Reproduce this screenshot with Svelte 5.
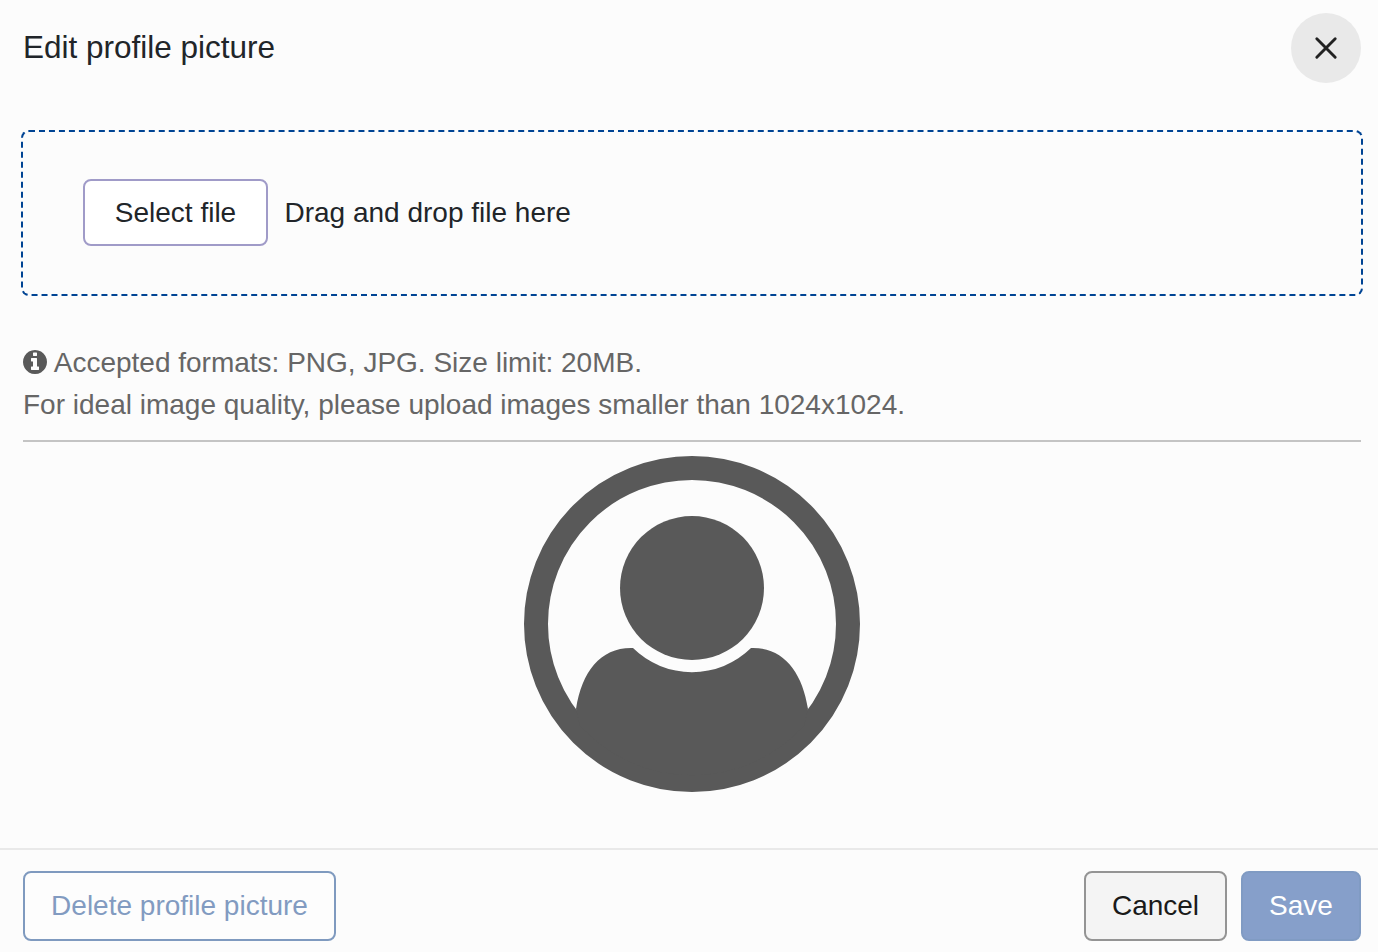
<script>
  let title = "Edit profile picture";
  let formats = "PNG, JPG";
  let sizeLimit = "20MB";
  let dimensions = "1024x1024";
</script>

<style>
  :global(body) {
    margin: 0;
    background-color: #fcfcfc;
  }

  .modal {
    display: flex;
    flex-direction: column;
    box-sizing: border-box;
    height: 952px;
    overflow: hidden;
    font-family: "Liberation Sans", Arial, sans-serif;
    font-size: 28px;
    line-height: 42px;
    color: #212529;
  }

  .modal-header {
    display: flex;
    justify-content: space-between;
    align-items: center;
    padding: 13px 17px 0 23px;
  }

  h2 {
    margin: 0;
    padding-bottom: 2px;
    font-size: 31.5px;
    font-weight: 400;
    line-height: 40px;
  }

  button {
    box-sizing: border-box;
    font: inherit;
    border-radius: 8px;
    border: 2px solid;
    padding: 0;
    cursor: pointer;
  }

  .close {
    display: flex;
    align-items: center;
    justify-content: center;
    width: 70px;
    height: 70px;
    border: none;
    border-radius: 50%;
    background-color: #e9e9e9;
    color: #222;
  }

  .modal-body {
    flex: 1;
    padding: 47px 15px 0 21px;
  }

  .dropzone {
    display: flex;
    align-items: flex-start;
    box-sizing: border-box;
    height: 166px;
    padding: 47px 0 0 60px;
    border: 2px dashed #004494;
    border-radius: 8px;
  }

  .select {
    width: 185px;
    height: 67px;
    margin-right: 16.5px;
    padding-top: 1px;
    border-color: #a09bc8;
    background-color: #fff;
    color: #212529;
  }

  .drop-label {
    padding-top: 13px;
  }

  .help {
    margin: 46px 2px 0;
    padding-bottom: 14px;
    border-bottom: 2px solid #c4c4c4;
    color: #666;
  }

  .help p {
    margin: 0;
  }

  .info {
    width: 24px;
    height: 24px;
    margin-right: 0.5px;
    vertical-align: -2px;
    color: #595959;
  }

  .avatar {
    display: block;
    width: 336px;
    height: 336px;
    margin: 14px auto 0;
    color: #595959;
  }

  .modal-footer {
    display: flex;
    box-sizing: border-box;
    height: 104px;
    padding: 21px 17px 0 23px;
    border-top: 2px solid #e9e9e9;
  }

  .modal-footer button {
    height: 70px;
  }

  .delete {
    width: 313px;
    margin-right: auto;
    border-color: #7f9abf;
    background-color: #fdfdfd;
    color: #829bc1;
  }

  .cancel {
    width: 143px;
    margin-right: 14px;
    border-color: #949494;
    background-color: #f4f4f4;
    color: #1a1a1a;
  }

  .save {
    width: 120px;
    border-color: #809bc3;
    background-color: #869fca;
    color: #fff;
  }
</style>

<div class="modal" role="dialog" aria-label={title}>
  <div class="modal-header">
    <h2>{title}</h2>
    <button class="close" type="button" aria-label="Close">
      <svg width="24" height="24" viewBox="0 0 24 24" fill="none" stroke="currentColor" stroke-width="2.9" stroke-linecap="round">
        <path d="M2.8 2.8l18.4 18.4M21.2 2.8L2.8 21.2" />
      </svg>
    </button>
  </div>

  <div class="modal-body">
    <div class="dropzone">
      <button class="select" type="button">Select file</button>
      <span class="drop-label">Drag and drop file here</span>
    </div>

    <div class="help">
      <p>
        <svg class="info" viewBox="0 128 1536 1536" fill="currentColor" aria-hidden="true">
          <path d="M1024 1376v-160q0-14-9-23t-23-9h-96v-512q0-14-9-23t-23-9h-320q-14 0-23 9t-9 23v160q0 14 9 23t23 9h96v320h-96q-14 0-23 9t-9 23v160q0 14 9 23t23 9h448q14 0 23-9t9-23zm-128-896v-160q0-14-9-23t-23-9h-192q-14 0-23 9t-9 23v160q0 14 9 23t23 9h192q14 0 23-9t9-23zm640 416q0 209-103 385.5t-279.5 279.5-385.5 103-385.5-103-279.5-279.5-103-385.5 103-385.5 279.5-279.5 385.5-103 385.5 103 279.5 279.5 103 385.5z" />
        </svg>
        Accepted formats: {formats}. Size limit: {sizeLimit}.
      </p>
      <p>For ideal image quality, please upload images smaller than {dimensions}.</p>
    </div>

    <svg class="avatar" viewBox="0 0 336 336" fill="currentColor" aria-hidden="true">
      <circle cx="168" cy="168" r="156" fill="none" stroke="currentColor" stroke-width="24" />
      <circle cx="168" cy="132" r="72" />
      <path d="M52 253C58 215 77 191 109 192A84 84 0 0 0 227 192C259 191 278 215 284 253L280 270A152 152 0 0 1 56 270Z" />
    </svg>
  </div>

  <div class="modal-footer">
    <button class="delete" type="button">Delete profile picture</button>
    <button class="cancel" type="button">Cancel</button>
    <button class="save" type="button">Save</button>
  </div>
</div>
